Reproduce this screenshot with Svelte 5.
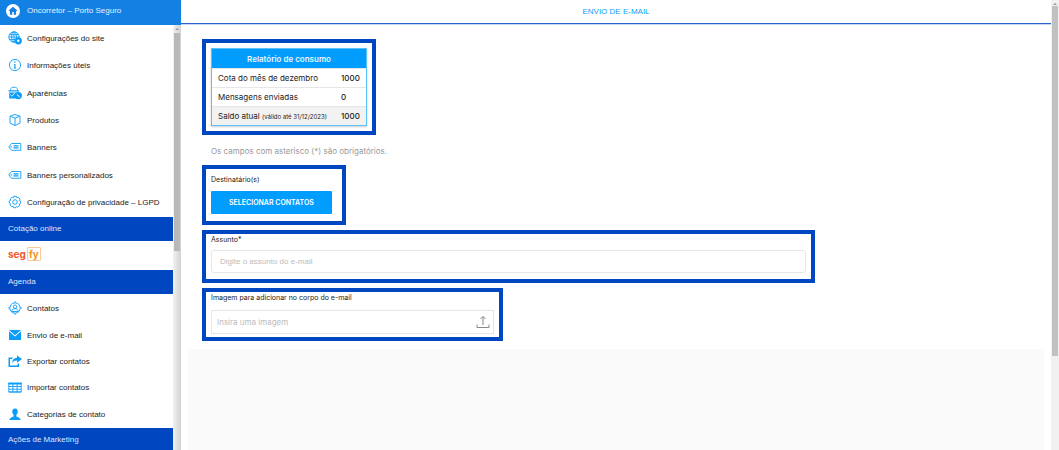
<script>
	const siteLinks = [
		{ icon: 'globe', label: 'Configurações do site' },
		{ icon: 'info', label: 'Informações úteis' },
		{ icon: 'paint', label: 'Aparências' },
		{ icon: 'box', label: 'Produtos' },
		{ icon: 'banner', label: 'Banners' },
		{ icon: 'banner', label: 'Banners personalizados' },
		{ icon: 'gear', label: 'Configuração de privacidade – LGPD' },
	]

	const agendaLinks = [
		{ icon: 'contact', label: 'Contatos' },
		{ icon: 'mail', label: 'Envio de e-mail' },
		{ icon: 'export', label: 'Exportar contatos' },
		{ icon: 'table', label: 'Importar contatos' },
		{ icon: 'person', label: 'Categorias de contato' },
	]

	const report = [
		{ label: 'Cota do mês de dezembro', value: 1000 },
		{ label: 'Mensagens enviadas', value: 0 },
		{ label: 'Saldo atual', note: '(válido até 31/12/2023)', value: 1000 },
	]

	let subject = $state('')
	let image = $state('')
</script>

{#snippet icon(name)}
	<svg class="icon" viewBox="0 0 14 14" aria-hidden="true">
		{#if name === 'globe'}
			<g class="line">
				<circle cx="6" cy="6" r="5.2" />
				<ellipse cx="6" cy="6" rx="2.4" ry="5.2" />
				<path d="M1 6h10M1.6 3.6h8.8M1.6 8.4h6M6 1v10" />
			</g>
			<circle cx="10.3" cy="9.8" r="3.6" />
			<circle cx="10.3" cy="9.8" r="1.2" fill="#fff" />
		{:else if name === 'info'}
			<circle class="line" cx="7" cy="7" r="5.6" />
			<path d="M6.3 3.6h1.3v1.2H6.3zM6 6h1.5v3.6h.7v.8H5.8v-.8h.6V6.8H6z" />
		{:else if name === 'paint'}
			<path class="line" d="M2.5 5V3.5C2.5 2 4 1.2 6 1.2S9.5 2 9.5 3.5V5" />
			<path d="M.5 4.2h10.5v1.3H.5zM1.2 6.500h8.500v6H1.200z" />
			<path d="M2.3 8.5l1.7 1.7 3-3.5" fill="none" stroke="#fff" stroke-width=".8" />
			<circle cx="10.3" cy="9.6" r="3.6" />
			<path d="M8.800 8.500l3 2.500" stroke="#fff" />
		{:else if name === 'box'}
			<path class="line" d="M7 1.5l5 1.7v7L7 12.5l-5-2.300v-7zM2 3.200l5 2 5-2M7 5.200v7.300" />
		{:else if name === 'banner'}
			<path class="line" d="M3.5 3.5h9.3v6.8H3.5L.8 6.9z" />
			<path d="M5.5 5.3h5v1.200h-5zM5.500 7.300h5v1.200h-5zM2.500 6.200h1.300v1.300H2.500z" />
		{:else if name === 'gear'}
			<g class="line">
				<path d="M5.7 1.3h2.600l.5 1.400 1.500-.5 1.700 1.900-.7 1.300 1.300.7v2.300l-1.400.6.5 1.500-1.900 1.700-1.300-.7-.7 1.200H5.700L5.200 11.300l-1.500.5L2 9.900l.6-1.300L1.300 8V5.800l1.400-.6-.4-1.400 1.800-1.700 1.200.6z" />
				<circle cx="7" cy="7" r="2.3" />
			</g>
		{:else if name === 'contact'}
			<g class="line">
				<circle cx="7" cy="7" r="5.2" />
				<circle cx="7" cy="5.7" r="1.7" />
				<path d="M3.8 10.500c0-2 1.400-2.800 3.200-2.800s3.200.8 3.200 2.800zM7 .2v1.600M7 12.200v1.600M.2 7h1.600M12.200 7h1.600" />
			</g>
		{:else if name === 'mail'}
			<path d="M1 2h12L7 7.200zM1 3.300l6 5.200 6-5.200V12H1z" />
		{:else if name === 'export'}
			<path d="M5 3.500H.5v9.500h10.500V9.300L9.500 10v1.500H2V5h2zM9 1.500L14 5 9 8.700V6.500C6.500 6.300 5 7.300 4 9.200c.2-3.200 2-5.200 5-5.400z" />
		{:else if name === 'table'}
			<path d="M.3 2.500h13.400v2H.3z" />
			<path class="line" d="M.8 3v9h12.400V3M.8 6.500h12.400M.8 9.200h12.400M.8 12h12.400M4.900 4v8M9.100 4v8" />
		{:else if name === 'person'}
			<path d="M7 1.500c2 0 2.900 1.300 2.700 3.200C9.600 6.300 9 7.200 8.400 7.700v1.700c1.800.8 4 1.200 4.300 3.600H1.300C1.600 10.600 3.800 10.200 5.600 9.400V7.700C5 7.200 4.400 6.300 4.300 4.700 4.100 2.800 5 1.500 7 1.500z" />
		{/if}
	</svg>
{/snippet}

{#snippet links(items)}
	{#each items as item}
		<li>
			<a href="#top">
				{@render icon(item.icon)}
				<span>{item.label}</span>
			</a>
		</li>
	{/each}
{/snippet}

<div class="app">
	<aside>
		<div class="brand">
			<svg viewBox="0 0 14 14" aria-hidden="true">
				<circle cx="7" cy="7" r="7" fill="#fff" />
				<path d="M7 2.8L2.7 6.6l.7.7.6-.5v3.9h2.2V8h1.6v2.700H10V6.800l.6.5.7-.7z" fill="#1381e4" />
			</svg>
			<span>Oncorretor – Porto Seguro</span>
		</div>
		<div class="side-body">
			<nav>
				<ul class="site">{@render links(siteLinks)}</ul>
				<h2>Cotação online</h2>
				<a class="segfy" href="#top"><span>seg</span><span class="fy">fy</span></a>
				<h2>Agenda</h2>
				<ul class="agenda">{@render links(agendaLinks)}</ul>
				<h2>Ações de Marketing</h2>
			</nav>
			<div class="scroll side-scroll">
				<i></i>
				<b></b>
			</div>
		</div>
	</aside>

	<main>
		<header><h1>ENVIO DE E-MAIL</h1></header>
		<div class="content">
			<section class="frame report">
				<table>
					<thead>
						<tr><th colspan="2">Relatório de consumo</th></tr>
					</thead>
					<tbody>
						{#each report as row}
							<tr>
								<td>{row.label}{#if row.note}&nbsp;<small>{row.note}</small>{/if}</td>
								<td>{row.value}</td>
							</tr>
						{/each}
					</tbody>
				</table>
			</section>

			<p class="hint">Os campos com asterisco (*) são obrigatórios.</p>

			<section class="frame recipients">
				<label for="recipients">Destinatário(s)</label>
				<button id="recipients" type="button">SELECIONAR CONTATOS</button>
			</section>

			<section class="frame subject">
				<label for="subject">Assunto*</label>
				<input id="subject" type="text" placeholder="Digite o assunto do e-mail" bind:value={subject} />
			</section>

			<section class="frame image">
				<label for="image">Imagem para adicionar no corpo do e-mail</label>
				<div class="upload">
					<input id="image" type="text" placeholder="Insira uma imagem" bind:value={image} />
					<svg viewBox="0 0 14 14" aria-hidden="true">
						<path d="M7 10V1.5M4.500 4L7 1.500 9.500 4M1 9.500v3h12v-3" />
					</svg>
				</div>
			</section>
		</div>
		<div class="editor"></div>
	</main>

	<div class="scroll page-scroll">
		<i></i>
		<b></b>
	</div>
</div>

<style>
	:global(body) {
		margin: 0;
		background: #fff;
	}

	.app {
		display: flex;
		height: 100vh;
		overflow: hidden;
		font-family: Inter, sans-serif;
		font-size: 8px;
		line-height: 12px;
		color: #222;
	}

	.app * {
		box-sizing: border-box;
	}

	aside {
		display: flex;
		flex-direction: column;
		flex: 0 0 181px;
		font-family: 'Liberation Sans', Arial, sans-serif;
	}

	.brand {
		display: flex;
		align-items: center;
		gap: 7px;
		flex: 0 0 25px;
		padding: 0 0 4px 6px;
		background: #1381e4;
		color: #e3f1ff;

		& svg {
			width: 14px;
			height: 14px;
		}
	}

	.side-body {
		display: flex;
		flex: 1;
		min-height: 0;
	}

	nav {
		flex: 1;
		overflow: hidden;

		& ul {
			display: grid;
			grid-auto-rows: 1fr;
			margin: 0;
			padding: 0;
			list-style: none;
		}

		& .site {
			height: 192px;
		}

		& .agenda {
			height: 134px;
			padding-top: 2px;
		}

		& li a {
			display: flex;
			align-items: center;
			gap: 5px;
			height: 100%;
			padding-left: 8px;
			color: #222;
			text-decoration: none;
			white-space: nowrap;
		}

		& h2 {
			height: 24px;
			margin: 0;
			padding-left: 8px;
			background: #0046c0;
			color: #dbe8ff;
			font-size: 8px;
			font-weight: 400;
			line-height: 24px;
		}
	}

	.icon {
		flex: none;
		width: 14px;
		height: 14px;
		margin-bottom: 2px;
		fill: #0b9dfb;

		& .line {
			fill: none;
			stroke: #0b9dfb;
			stroke-width: 0.9;
		}
	}

	.segfy {
		display: flex;
		align-items: center;
		gap: 1px;
		height: 29px;
		padding: 0 0 4px 8px;
		color: #f05a28;
		font-family: Inter, sans-serif;
		font-size: 10px;
		font-weight: 700;
		text-decoration: none;

		& .fy {
			padding: 0 1px;
			border: 1px solid #fbc999;
			border-radius: 1px;
			color: #f7941e;
		}
	}

	.scroll {
		display: flex;
		flex-direction: column;
		align-items: center;
		background: #f1f1f1;

		& i {
			margin: 3px 0 1px;
			border: 2px solid transparent;
			border-top: 0;
			border-bottom-color: #999;
		}

		& b {
			width: 6px;
			background: #c1c1c1;
		}
	}

	.side-scroll {
		flex: 0 0 8px;
		background: linear-gradient(to right, #f1f1f1, #d2d2d2);

		& b {
			height: 218px;
			margin-top: 2px;
			background: #b8b8b8;
		}
	}

	.page-scroll {
		flex: 0 0 8px;

		& b {
			height: 350px;
			background: #c1c1c1;
		}
	}

	main {
		display: flex;
		flex-direction: column;
		flex: 1;
		min-width: 0;
	}

	header {
		flex: 0 0 24px;
		border-bottom: 1px solid #2a63c8;
		box-shadow: 0 1px #c5d6f2;
		text-align: center;

		& h1 {
			margin: 0;
			color: #0b9dfb;
			font-family: 'Liberation Sans', Arial, sans-serif;
			font-size: 8px;
			font-weight: 400;
			line-height: 23px;
		}
	}

	.content {
		display: flex;
		flex-direction: column;
		align-items: flex-start;
		padding: 15px 21px 8px;
	}

	.frame {
		display: flex;
		flex-direction: column;
		max-width: 100%;
		padding: 5px;
		border: 4px solid #0046c0;

		& label {
			font-size: 7px;
			line-height: 10px;
		}
	}

	.report {
		width: 174px;
		height: 96px;
	}

	table {
		border: 1px solid #5cc0fb;
		border-collapse: separate;
		border-spacing: 0;
		box-shadow: 0 1px 2px #ccc;

		& th {
			height: 19px;
			padding: 0;
			background: #009dff;
			color: #e8f6ff;
			font-weight: 600;
		}

		& td {
			height: 19px;
			padding: 0 0 0 6px;
			border-top: 1px solid #e6e6e6;
			white-space: nowrap;
		}

		& td:last-child {
			width: 31px;
			font-weight: 500;
		}

		& tr:last-child td {
			background: #f2f2f2;
		}

		& small {
			font-size: 6px;
		}
	}

	.hint {
		margin: 10px 9px 8px;
		color: #999;
	}

	.recipients {
		width: 144px;
		height: 60px;
		margin-bottom: 5px;
		padding-top: 6px;

		& button {
			width: 121px;
			height: 23px;
			margin-top: 6px;
			padding: 0;
			border: 0;
			border-radius: 1px;
			background: #009dff;
			color: #fff;
			font: 600 7px/12px Inter, sans-serif;
		}
	}

	.subject,
	.image {
		height: 53px;
		margin-bottom: 5px;
		padding-top: 1px;
	}

	input {
		width: 100%;
		border: 1px solid #e6e6e6;
		background: #fff;
		color: #222;
		font: 8px/12px Inter, sans-serif;

		&::placeholder {
			color: #bbb;
			opacity: 1;
		}
	}

	.subject {
		width: 613px;

		& input {
			height: 23px;
			margin-top: 5px;
			padding: 0 8px;
			border-radius: 3px;
			font-family: 'Liberation Sans', Arial, sans-serif;
		}
	}

	.image {
		width: 301px;
		margin-bottom: 0;

		& input {
			height: 24px;
			padding: 0 24px 0 5px;
		}
	}

	.upload {
		position: relative;
		margin-top: 7px;

		& svg {
			position: absolute;
			top: 5px;
			right: 4px;
			width: 14px;
			height: 14px;
			fill: none;
			stroke: #888;
		}
	}

	.editor {
		flex: 1;
		margin: 0 7px;
		background: #fafafa;
	}
</style>
